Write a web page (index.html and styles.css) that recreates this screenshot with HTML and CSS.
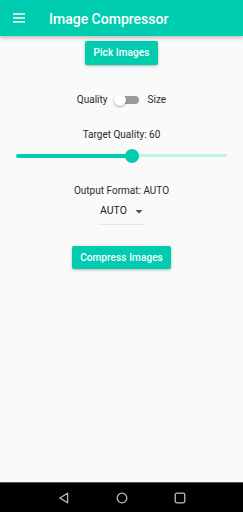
FILE: index.html
```html
<!DOCTYPE html>
<html>
<head>
<meta charset="utf-8">
<link rel="stylesheet" href="styles.css">
</head>
<body>
<div class="screen">
  <header class="appbar">
    <svg class="menu" width="12" height="10" viewBox="0 0 12 10"><rect x="0" y="0.3" width="12" height="1.5" fill="#fff"/><rect x="0" y="4.2" width="12" height="1.5" fill="#fff"/><rect x="0" y="8.1" width="12" height="1.5" fill="#fff"/></svg>
    <h1 class="title">Image Compressor</h1>
  </header>
  <main class="content">
    <button class="btn btn-pick">Pick Images</button>
    <div class="switch-row">
      <span class="label">Quality</span>
      <div class="switch"><div class="track"></div><div class="thumb"></div></div>
      <span class="label">Size</span>
    </div>
    <div class="text target">Target Quality: 60</div>
    <div class="slider">
      <div class="active" style="width:116px"></div>
      <div class="thumb-s"></div>
      <div class="inactive"></div>
    </div>
    <div class="text output">Output Format: AUTO</div>
    <div class="dropdown">
      <span class="dd-value">AUTO</span>
      <svg class="dd-arrow" width="8" height="4" viewBox="0 0 8 4"><path d="M0.5 0 L7.5 0 L4 3.8 Z" fill="#555"/></svg>
    </div>
    <button class="btn btn-compress">Compress Images</button>
  </main>
  <nav class="navbar">
    <svg width="12" height="12" viewBox="0 0 12 12"><path d="M9.6 1.2 L9.6 10.8 L1.8 6 Z" fill="none" stroke="#bdbdbd" stroke-width="1.3" stroke-linejoin="round"/></svg>
    <svg width="12" height="12" viewBox="0 0 12 12"><circle cx="6" cy="6" r="4.8" fill="none" stroke="#bdbdbd" stroke-width="1.3"/></svg>
    <svg width="12" height="12" viewBox="0 0 12 12"><rect x="1.2" y="1.2" width="9.6" height="9.6" rx="1.8" fill="none" stroke="#bdbdbd" stroke-width="1.3"/></svg>
  </nav>
</div>
</body>
</html>
```
FILE: styles.css
```css
* { box-sizing: border-box; }
html, body { margin: 0; padding: 0; }
body { background: #fafafa; font-family: Roboto, "Liberation Sans", sans-serif; }
.screen { width: 243px; height: 512px; display: flex; flex-direction: column; overflow: hidden; }
.appbar {
  height: 36px; flex: none; background: #00ccb0; display: flex; align-items: center;
  padding-left: 13px; box-shadow: 0 2px 4px rgba(0,0,0,0.25); position: relative; z-index: 1;
}
.menu { display: block; }
.title { margin: 0 0 0 24px; font-size: 14px; font-weight: 500; color: #fff; line-height: 16px; padding-top: 2px; white-space: nowrap; }
.content { flex: 1; display: flex; flex-direction: column; align-items: center; }
.btn {
  border: none; background: #00ccb0; color: #fff; font-family: Roboto, "Liberation Sans", sans-serif;
  font-size: 10px; font-weight: 500; height: 24px; padding: 0; border-radius: 2px; white-space: nowrap;
  text-align: center; box-shadow: 0 1px 3px rgba(0,0,0,0.28); letter-spacing: 0.1px; line-height: 24px;
}
.btn-pick { margin-top: 5px; width: 73px; }
.btn-compress { margin-top: 21px; width: 99px; height: 23px; line-height: 23px; }
.switch-row { margin-top: 28px; display: flex; align-items: center; height: 14px; }
.label { font-size: 10px; color: #2a2a2a; line-height: 12px; }
.switch { position: relative; width: 25px; height: 14px; margin: 0 9px 0 6px; }
.track { position: absolute; left: 3px; right: 0; top: 3px; height: 8px; border-radius: 4px; background: #9a9a9a; }
.thumb {
  position: absolute; left: 0; top: 1px; width: 12px; height: 12px; border-radius: 50%;
  background: #fff; box-shadow: 0 1px 2px rgba(0,0,0,0.35);
}
.text { font-size: 10px; line-height: 12px; color: #2a2a2a; }
.target { margin-top: 22px; }
.slider { margin-top: 7.5px; width: 211px; height: 14px; display: flex; align-items: center; }
.active { height: 4px; background: #00ccb0; border-radius: 2px 0 0 2px; }
.thumb-s { width: 14px; height: 14px; border-radius: 50%; background: #00ccb0; margin: 0 -4px 0 -7px; position: relative; z-index: 1; flex: none; }
.inactive { flex: 1; height: 3px; background: #bdf1e9; border-radius: 0 1.5px 1.5px 0; }
.output { margin-top: 22.5px; }
.dropdown {
  margin-top: 7px; width: 47px; display: flex; align-items: center; padding: 0 0 6px 2px;
  border-bottom: 1px solid #e6e6e6;
}
.dd-value { font-size: 10.5px; line-height: 14px; color: #222; }
.dd-arrow { margin-left: 8px; margin-top: 1px; }
.navbar {
  height: 30px; flex: none; background: #000; border-top: 1px solid #555;
  display: flex; align-items: center; justify-content: center; gap: 46px; padding-top: 1px;
}
.navbar svg { display: block; }
```
